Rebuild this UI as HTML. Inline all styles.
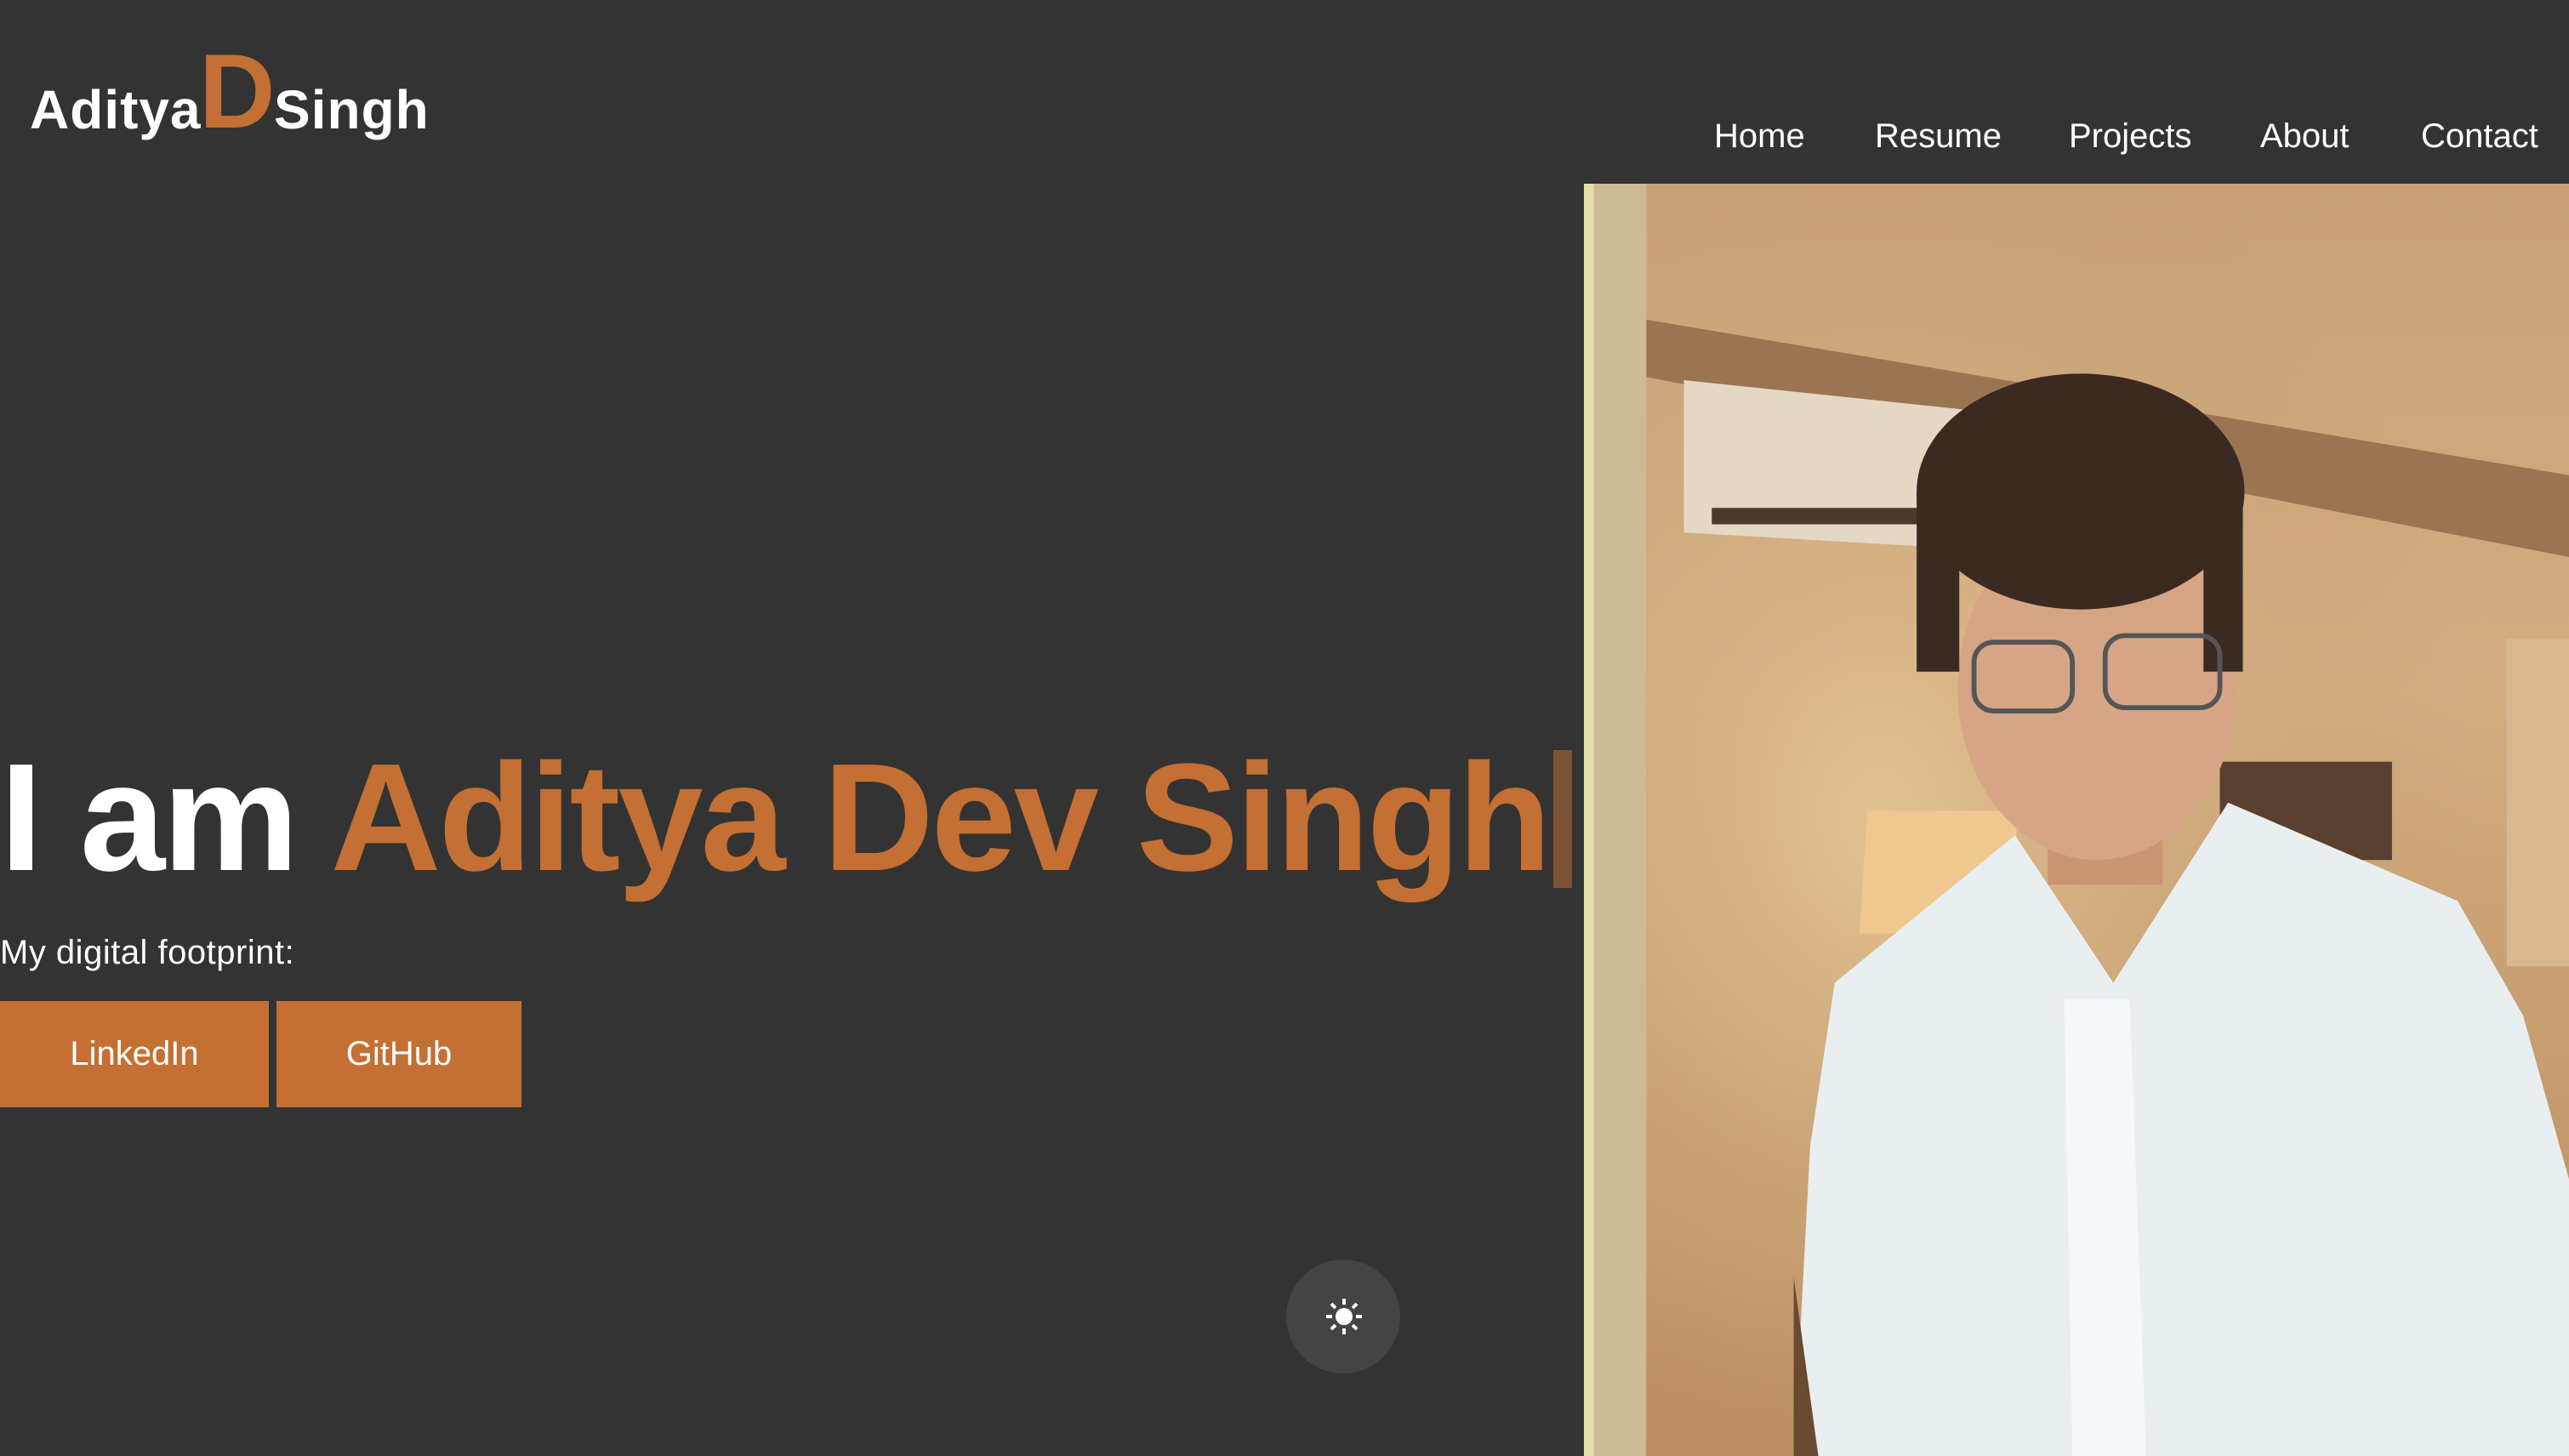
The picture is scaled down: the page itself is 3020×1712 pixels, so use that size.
<!DOCTYPE html>
<html><head><meta charset="utf-8"><style>
html,body{margin:0;padding:0}
body{width:3020px;height:1712px;background:#333333;position:relative;overflow:hidden;font-family:"Liberation Sans",sans-serif;color:#fff}
.a{position:absolute;line-height:1;white-space:nowrap}
.o{color:#c46f33}
.btn{position:absolute;background:#c46f33;display:flex;align-items:center;justify-content:center;font-size:40px;color:#fff}
</style></head><body>
<div class="a" style="left:35px;top:97px;font-size:64px;font-weight:bold;letter-spacing:1px">Aditya</div>
<div class="a o" style="left:234px;top:46px;font-size:124px;font-weight:bold">D</div>
<div class="a" style="left:322px;top:97px;font-size:64px;font-weight:bold;letter-spacing:1px">Singh</div>

<div class="a" style="left:2015px;top:140px;font-size:40px">Home</div>
<div class="a" style="left:2204px;top:140px;font-size:40px">Resume</div>
<div class="a" style="left:2432px;top:140px;font-size:40px">Projects</div>
<div class="a" style="left:2657px;top:140px;font-size:40px">About</div>
<div class="a" style="left:2846px;top:140px;font-size:40px">Contact</div>

<div class="a" style="left:0;top:872px;font-size:180px;font-weight:bold;letter-spacing:-3px">I am <span class="o">Aditya Dev Singh</span></div>
<div style="position:absolute;left:1826px;top:882px;width:22px;height:162px;background:#7d5234"></div>

<div class="a" style="left:0;top:1100px;font-size:40px;letter-spacing:0.5px">My digital footprint:</div>
<div class="btn" style="left:0;top:1177px;width:316px;height:125px">LinkedIn</div>
<div class="btn" style="left:325px;top:1177px;width:288px;height:125px">GitHub</div>

<div style="position:absolute;left:1512px;top:1481px;width:134px;height:134px;border-radius:50%;background:#444"></div>
<svg style="position:absolute;left:1535px;top:1505px" width="90" height="90" viewBox="0 0 90 90">
<circle cx="45" cy="43" r="10" fill="#fff"/>
<g stroke="#fff" stroke-width="4">
<line x1="45" y1="22" x2="45" y2="29"/><line x1="45" y1="57" x2="45" y2="64"/>
<line x1="24" y1="43" x2="31" y2="43"/><line x1="59" y1="43" x2="66" y2="43"/>
<line x1="30" y1="28" x2="35" y2="33"/><line x1="55" y1="53" x2="60" y2="58"/>
<line x1="60" y1="28" x2="55" y2="33"/><line x1="35" y1="53" x2="30" y2="58"/>
</g></svg>

<svg style="position:absolute;left:1862px;top:216px" width="1158" height="1496" viewBox="967 112 601 777" preserveAspectRatio="none">
<defs>
<linearGradient id="w" x1="0" y1="0" x2="0" y2="1"><stop offset="0" stop-color="#c9a27a"/><stop offset="0.4" stop-color="#d2ad80"/><stop offset="1" stop-color="#b88c5e"/></linearGradient>
<radialGradient id="l" cx="0.3" cy="0.5" r="0.6"><stop offset="0" stop-color="#e2c293"/><stop offset="1" stop-color="#c29a6c" stop-opacity="0"/></radialGradient>
</defs>
<rect x="967" y="112" width="601" height="777" fill="url(#w)"/>
<rect x="967" y="112" width="601" height="777" fill="url(#l)"/>
<polygon points="1005,195 1568,290 1568,340 1005,230" fill="#9b7552"/>
<rect x="967" y="112" width="38" height="777" fill="#cdbb98"/>
<rect x="967" y="112" width="6" height="777" fill="#e6e0a8"/>
<polygon points="1028,232 1200,250 1200,335 1028,325" fill="#e4d8c4"/>
<rect x="1045" y="310" width="130" height="10" fill="#4a3a2c"/>
<rect x="1355" y="465" width="105" height="60" fill="#5a4030"/>
<polygon points="1140,495 1230,495 1235,570 1135,570" fill="#efc88f"/>
<rect x="1530" y="390" width="38" height="200" fill="#d8b88e"/>
<rect x="1250" y="450" width="70" height="90" fill="#c99474"/>
<ellipse cx="1280" cy="420" rx="85" ry="105" fill="#d6a585"/>
<ellipse cx="1270" cy="300" rx="100" ry="72" fill="#3b2a21"/>
<rect x="1170" y="300" width="26" height="110" fill="#3b2a21"/>
<rect x="1345" y="300" width="24" height="110" fill="#3b2a21"/>
<rect x="1205" y="392" width="60" height="42" rx="12" fill="none" stroke="#555" stroke-width="3"/>
<rect x="1285" y="388" width="70" height="44" rx="12" fill="none" stroke="#555" stroke-width="3"/>
<polygon points="1095,889 1105,700 1120,600 1230,510 1290,600 1360,490 1500,550 1540,620 1568,720 1568,889" fill="#e9eef1"/>
<polygon points="1260,610 1300,610 1310,889 1265,889" fill="#f5f8fa"/>
<polygon points="1095,780 1110,889 1095,889" fill="#6a4a30"/>
</svg>
</body></html>
